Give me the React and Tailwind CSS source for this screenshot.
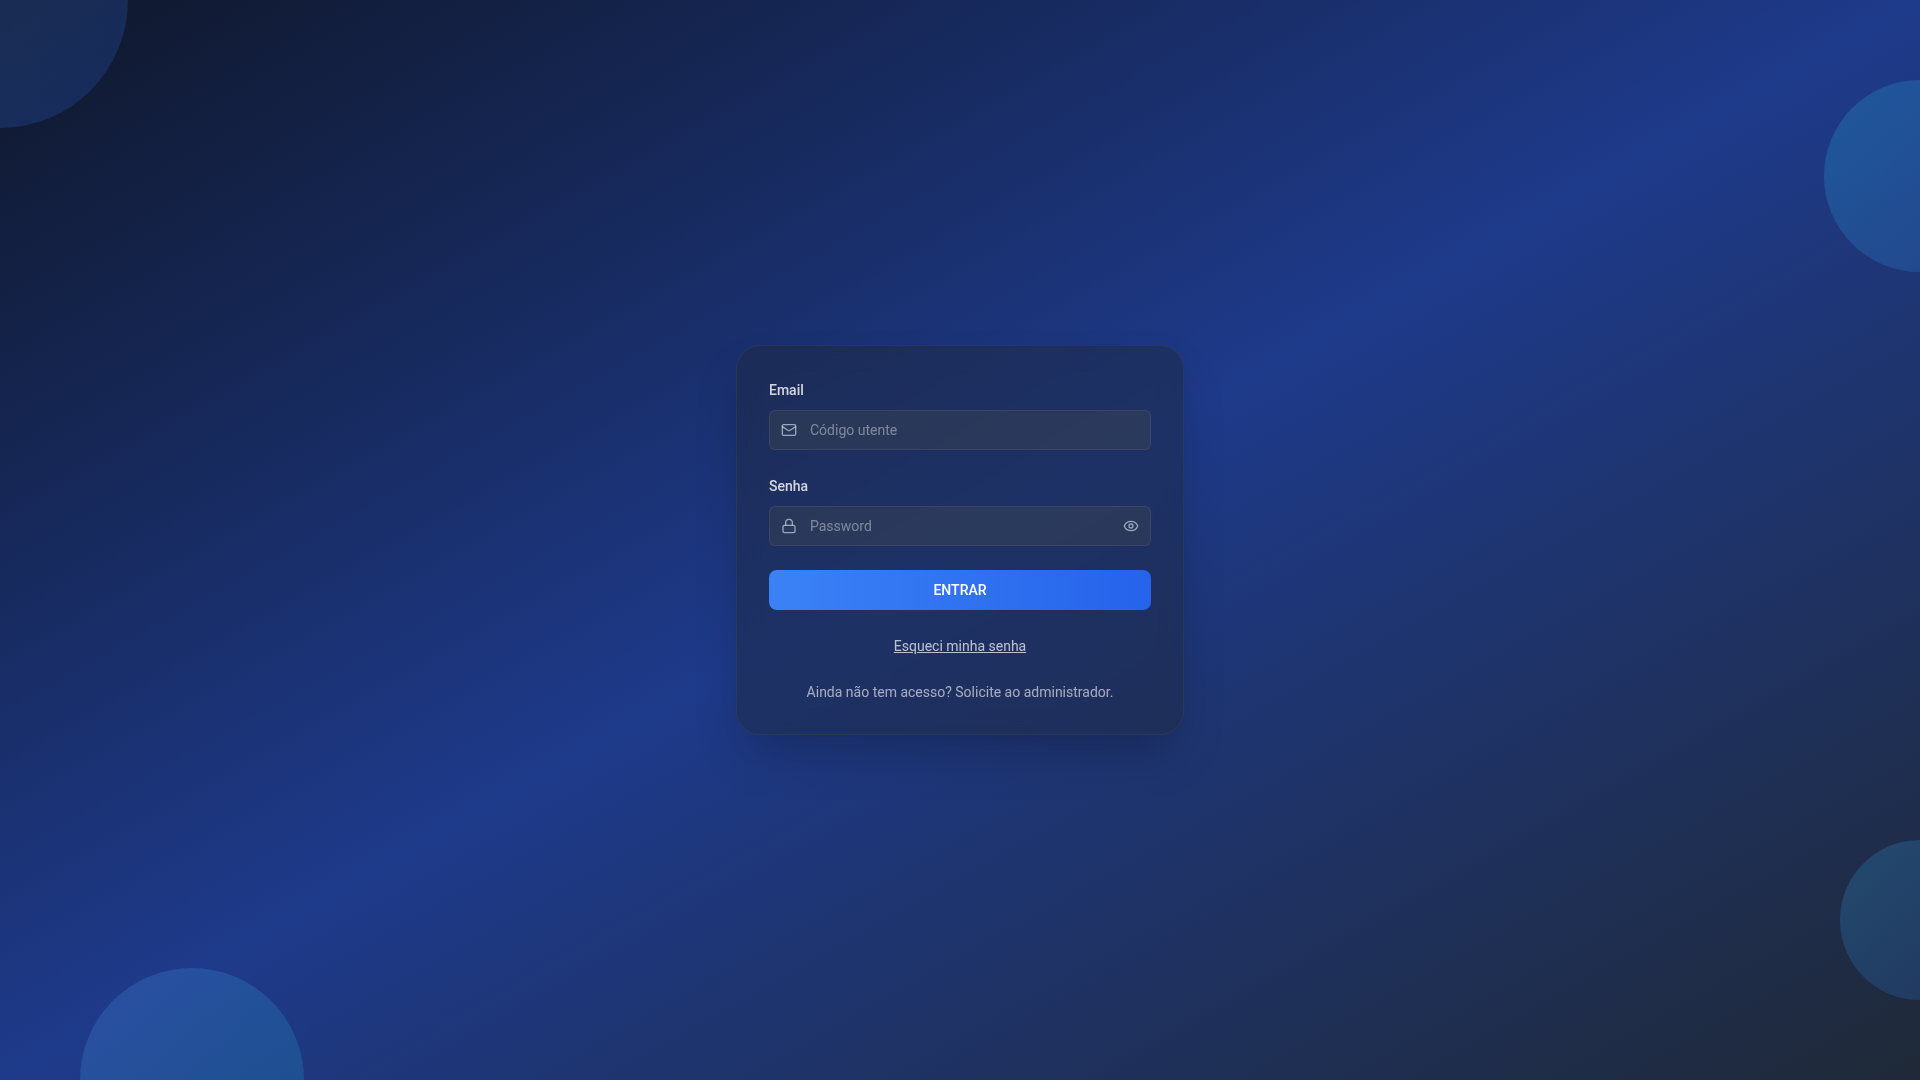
import { useState } from "react";
import { Eye, EyeOff, Lock, Mail } from "lucide-react";

function Field({ id, label, type, placeholder, icon: Icon, children }) {
  return (
    <div className="flex flex-col gap-2">
      <label htmlFor={id} className="text-sm leading-6 font-medium text-white/80">
        {label}
      </label>
      <div className="relative">
        <input
          id={id}
          type={type}
          placeholder={placeholder}
          className="block h-10 w-full rounded-md border border-gray-600/50 bg-gray-700/50 px-10 text-sm text-white outline-none placeholder:text-white/40 focus:border-blue-500"
        />
        <Icon className="pointer-events-none absolute inset-y-3 left-3 size-4 text-slate-300/70" />
        {children}
      </div>
    </div>
  );
}

export default function App() {
  const [visible, setVisible] = useState(false);
  const EyeIcon = visible ? EyeOff : Eye;

  return (
    <main className="relative flex min-h-screen items-center justify-center overflow-hidden bg-[linear-gradient(to_bottom_right,#0f172a,#1e3a8a,#1f2937)] p-4 font-[Roboto,sans-serif]">
      <div className="absolute -top-32 -left-32 size-64 rounded-full bg-[linear-gradient(to_bottom_right,#60a5fa,#2563eb)] opacity-20" />
      <div className="absolute top-20 -right-24 size-48 rounded-full bg-[linear-gradient(to_bottom_right,#22d3ee,#3b82f6)] opacity-20" />
      <div className="absolute -bottom-28 left-20 size-56 rounded-full bg-[linear-gradient(to_bottom_right,#60a5fa,#06b6d4)] opacity-20" />
      <div className="absolute -right-20 bottom-20 size-40 rounded-full bg-[linear-gradient(to_bottom_right,#38bdf8,#2563eb)] opacity-20" />

      <form
        onSubmit={(e) => e.preventDefault()}
        className="relative flex w-full max-w-md flex-col gap-6 rounded-3xl border border-gray-700/50 bg-[#1f293b]/45 p-8 shadow-2xl backdrop-blur-md"
      >
        <Field id="email" label="Email" type="text" placeholder="Código utente" icon={Mail} />
        <Field id="password" label="Senha" type={visible ? "text" : "password"} placeholder="Password" icon={Lock}>
          <button
            type="button"
            aria-label="Mostrar senha"
            onClick={() => setVisible(!visible)}
            className="absolute inset-y-3 right-3 text-slate-300/70"
          >
            <EyeIcon className="size-4" />
          </button>
        </Field>
        <button
          type="submit"
          className="h-10 rounded-lg bg-[linear-gradient(to_right,#3b82f6,#2563eb)] text-sm font-medium text-white"
        >
          ENTRAR
        </button>
        <a href="#recuperar" className="self-center text-sm leading-6 text-white/70 underline">
          Esqueci minha senha
        </a>
        <p className="text-center text-sm text-white/60">Ainda não tem acesso? Solicite ao administrador.</p>
      </form>
    </main>
  );
}
